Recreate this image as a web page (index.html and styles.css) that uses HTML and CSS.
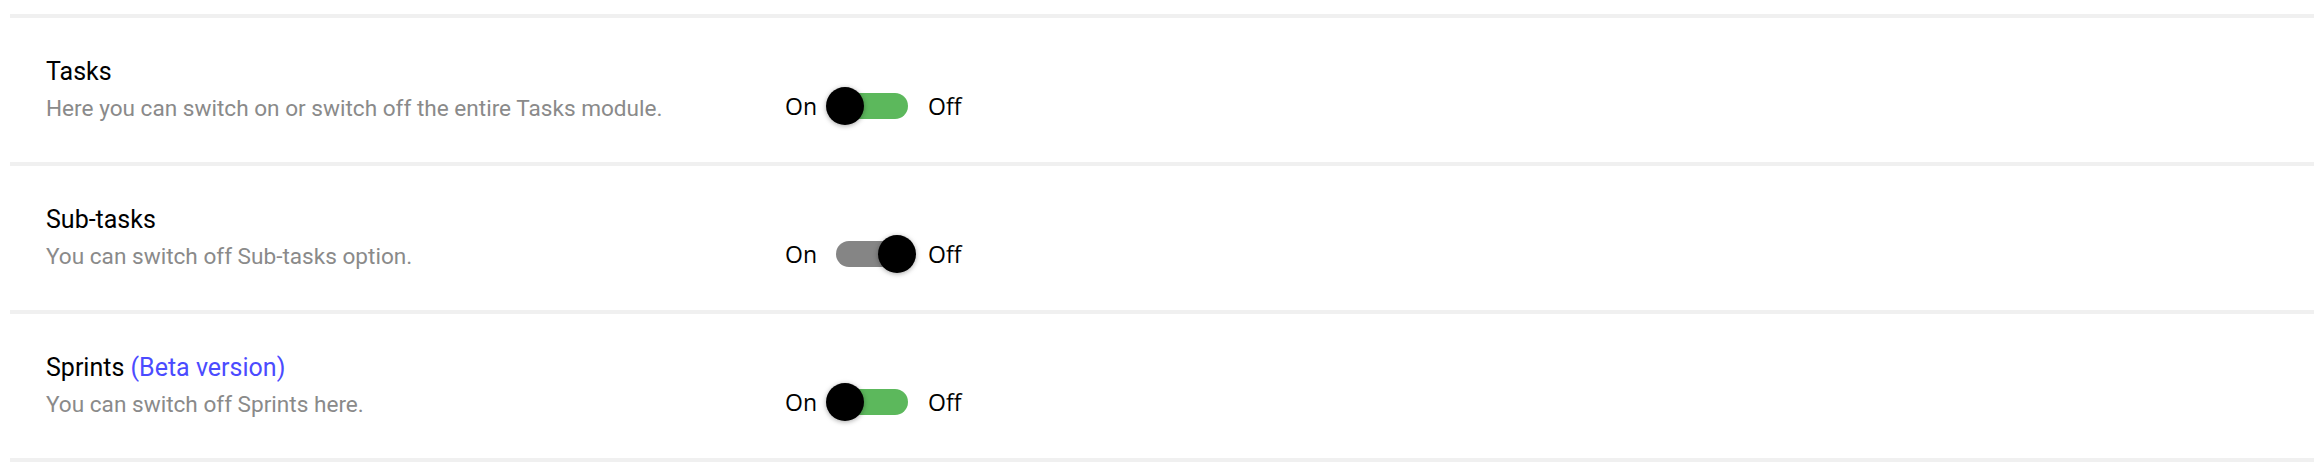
FILE: index.html
```html
<!DOCTYPE html>
<html lang="en">
<head>
<meta charset="utf-8">
<title>Modules</title>
<link rel="stylesheet" href="styles.css">
</head>
<body>
<div class="settings">
  <div class="row">
    <div class="info">
      <div class="title">Tasks</div>
      <div class="desc">Here you can switch on or switch off the entire Tasks module.</div>
    </div>
    <div class="toggle">
      <span class="label">On</span>
      <span class="track on"><span class="knob"></span></span>
      <span class="label off-label">Off</span>
    </div>
  </div>
  <div class="row">
    <div class="info">
      <div class="title">Sub-tasks</div>
      <div class="desc">You can switch off Sub-tasks option.</div>
    </div>
    <div class="toggle">
      <span class="label">On</span>
      <span class="track off"><span class="knob"></span></span>
      <span class="label off-label">Off</span>
    </div>
  </div>
  <div class="row last">
    <div class="info">
      <div class="title">Sprints <span class="beta">(Beta version)</span></div>
      <div class="desc">You can switch off Sprints here.</div>
    </div>
    <div class="toggle">
      <span class="label">On</span>
      <span class="track on"><span class="knob"></span></span>
      <span class="label off-label">Off</span>
    </div>
  </div>
</div>
</body>
</html>
```
FILE: styles.css
```css
html, body {
  margin: 0;
  padding: 0;
  background: #ffffff;
}

.settings {
  margin: 14px 10px 0 10px;
}

.row {
  box-sizing: border-box;
  height: 148px;
  border-top: 4px solid #f0f0f0;
  padding: 40px 0 0 36px;
  display: flex;
  align-items: flex-start;
}

.row.last {
  height: 152px;
  border-bottom: 4px solid #f0f0f0;
}

.info {
  flex: 0 0 739px;
  font-family: Roboto, "Liberation Sans", sans-serif;
  white-space: nowrap;
}

.title {
  font-size: 25px;
  line-height: 28px;
  color: #000000;
}

.beta {
  color: #4b4bff;
}

.desc {
  margin-top: 9px;
  font-size: 22.6px;
  line-height: 27px;
  color: #8a8a8a;
}

.toggle {
  margin-top: 29px;
  height: 38px;
  display: flex;
  align-items: center;
  font-family: "Open Sans", "Noto Sans", sans-serif;
  font-size: 23px;
  color: #000000;
}

.label {
  line-height: 38px;
}

.track {
  position: relative;
  width: 72px;
  height: 26px;
  border-radius: 13px;
  margin: 0 20px 0 19px;
}

.track.on {
  background: #5cb85c;
}

.track.off {
  background: #858585;
}

.knob {
  position: absolute;
  top: -6px;
  width: 38px;
  height: 38px;
  border-radius: 50%;
  background: #000000;
  box-shadow: 0 1px 5px rgba(0, 0, 0, 0.35);
}

.track.on .knob {
  left: -10px;
}

.track.off .knob {
  right: -8px;
}
```
